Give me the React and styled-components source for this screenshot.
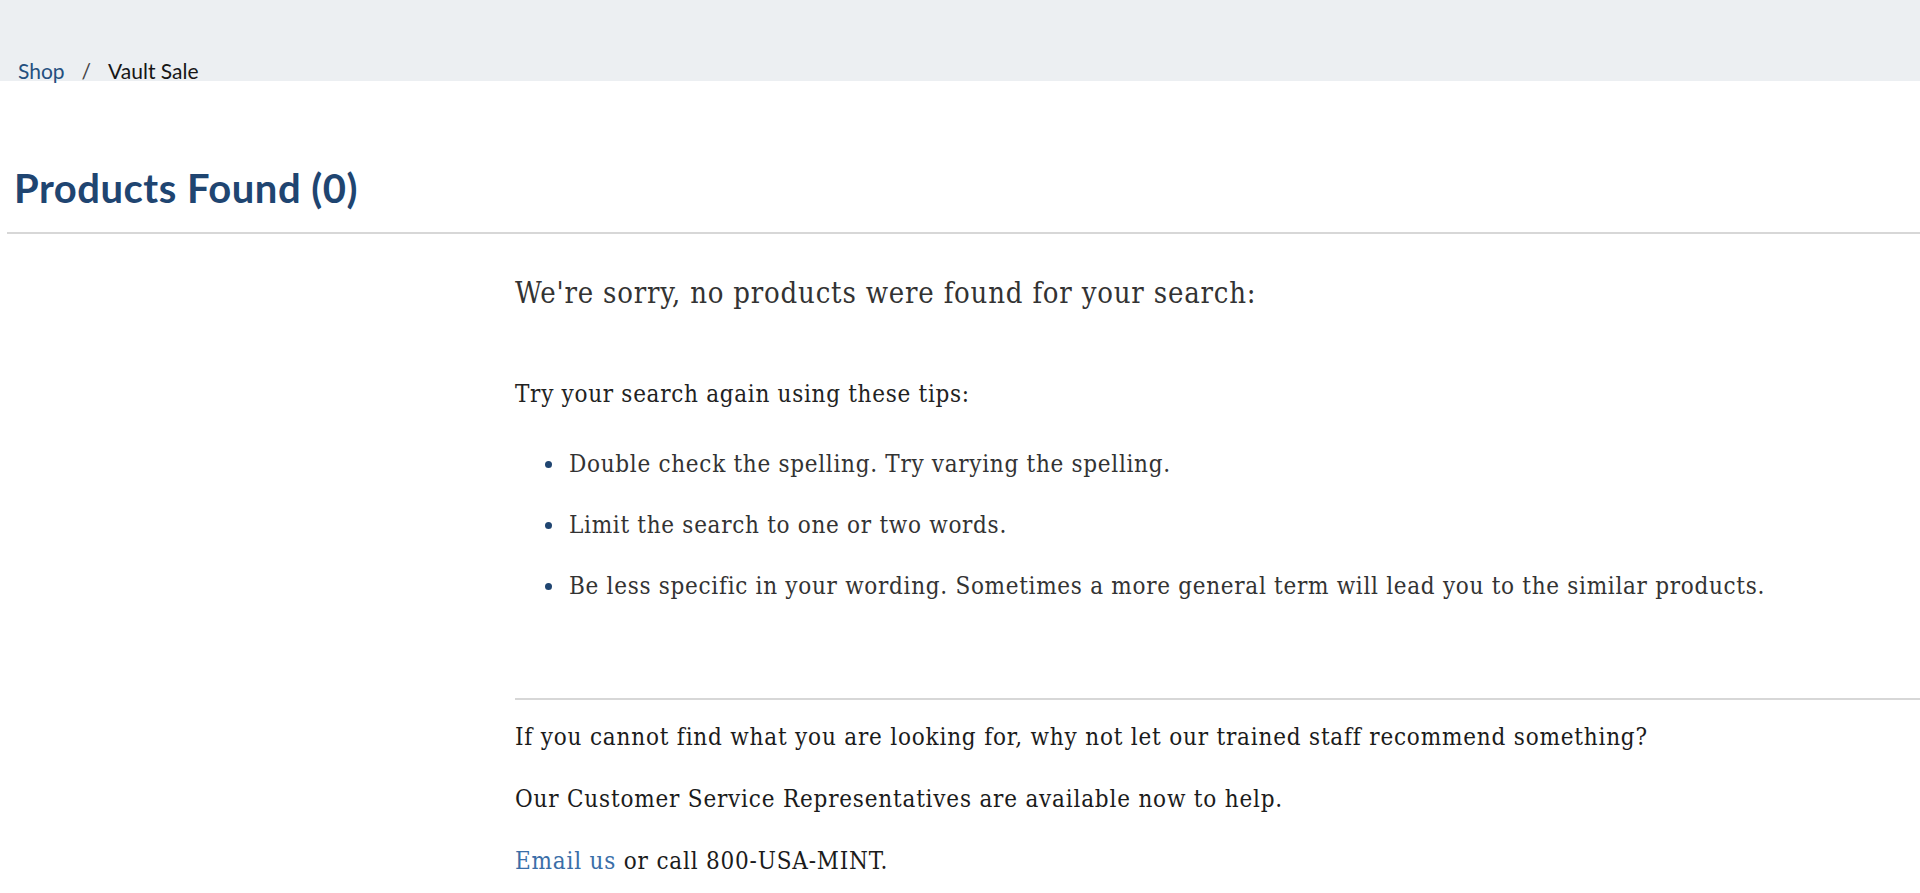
import styled, { createGlobalStyle } from "styled-components"

const GlobalStyle = createGlobalStyle`
    body {
        margin: 0;
        background: #fff;
        font-family: "Lato", "Open Sans", sans-serif;
    }
    * {
        box-sizing: border-box;
    }
`

const tips = [
    "Double check the spelling. Try varying the spelling.",
    "Limit the search to one or two words.",
    "Be less specific in your wording. Sometimes a more general term will lead you to the similar products.",
]

export default function App() {
    return (
        <>
            <GlobalStyle />
            <TopBand>
                <Breadcrumb>
                    <Crumb href="#">Shop</Crumb>
                    <Separator>/</Separator>
                    <Current>Vault Sale</Current>
                </Breadcrumb>
            </TopBand>

            <Main>
                <TitleBar>
                    <h1>Products Found (0)</h1>
                </TitleBar>

                <Results>
                    <Sidebar />
                    <NoResults>
                        <Sorry>We're sorry, no products were found for your search:</Sorry>
                        <TipsIntro>Try your search again using these tips:</TipsIntro>
                        <TipList>
                            {tips.map((tip) => (
                                <Tip key={tip}>{tip}</Tip>
                            ))}
                        </TipList>

                        <Help>
                            <HelpLine>If you cannot find what you are looking for, why not let our trained staff recommend something?</HelpLine>
                            <HelpLine>Our Customer Service Representatives are available now to help.</HelpLine>
                            <HelpLine>
                                <EmailLink href="#">Email us</EmailLink> or call 800-USA-MINT.
                            </HelpLine>
                        </Help>
                    </NoResults>
                </Results>
            </Main>
        </>
    )
}

const TopBand = styled.header`
    height: 81px;
    background-color: #eceff2;
    display: flex;
    align-items: flex-end;
    padding-left: 18px;
`
const Breadcrumb = styled.nav`
    display: flex;
    font-size: 21px;
    line-height: 20px;
    color: #1a1a1a;
`
const Crumb = styled.a`
    color: #24507f;
    text-decoration: none;
`
const Separator = styled.span`
    margin: 0 17px;
    color: #444;
`
const Current = styled.span`
    color: #161616;
`
const Main = styled.main`
    padding-left: 7px;
`
const TitleBar = styled.div`
    border-bottom: 2px solid #d7d7d7;
    padding: 84px 0 21px 7px;
    h1 {
        margin: 0;
        font-family: "Lato", sans-serif;
        font-weight: 700;
        font-size: 40px;
        line-height: 46px;
        letter-spacing: 0.5px;
        color: #1f4571;
    }
`
const Results = styled.section`
    display: grid;
    grid-template-columns: 508px 1fr;
`
const Sidebar = styled.aside``

const NoResults = styled.div`
    font-family: "DejaVu Serif Condensed", "DejaVu Serif", serif;
    font-stretch: condensed;
    color: #333;
    padding-top: 41px;
`
const Sorry = styled.h2`
    margin: 0;
    font-weight: 400;
    font-size: 29px;
    line-height: 36px;
    letter-spacing: 0.8px;
    color: #333;
`
const TipsIntro = styled.p`
    margin: 68px 0 0;
    font-size: 24px;
    line-height: 30px;
    letter-spacing: 0.7px;
    color: #222;
`
const TipList = styled.ul`
    margin: 40px 0 0;
    padding-left: 30px;
    list-style: none;
`
const Tip = styled.li`
    display: flex;
    align-items: center;
    font-size: 24px;
    line-height: 30px;
    letter-spacing: 0.7px;
    color: #333;
    & + & {
        margin-top: 31px;
    }
    &::before {
        content: "";
        flex: none;
        width: 7px;
        height: 7px;
        border-radius: 50%;
        background: #1f4571;
        margin-right: 17px;
    }
`
const Help = styled.div`
    margin-top: 97px;
    border-top: 2px solid #d7d7d7;
    padding-top: 22px;
`
const HelpLine = styled.p`
    margin: 0;
    font-size: 24px;
    line-height: 30px;
    letter-spacing: 0.8px;
    color: #1b1b1b;
    & + & {
        margin-top: 32px;
    }
`
const EmailLink = styled.a`
    color: #3a6ea8;
    text-decoration: none;
`
